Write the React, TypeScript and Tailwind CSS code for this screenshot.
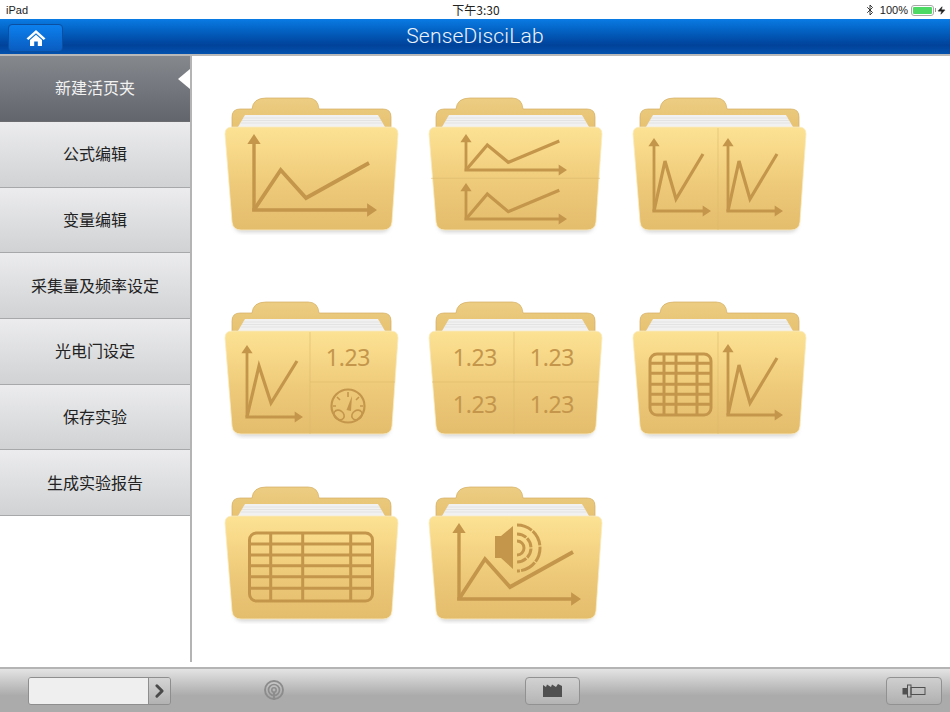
import { type ReactNode } from 'react'
import { Bluetooth, Zap, ChevronRight } from 'lucide-react'

const INK = '#c4964c'
const CJK = "font-['Noto_Sans_CJK_SC','Liberation_Sans',sans-serif]"

const menu = ['新建活页夹', '公式编辑', '变量编辑', '采集量及频率设定', '光电门设定', '保存实验', '生成实验报告']

const FOLDER_PATH = 'M3 39 Q3 32 10 32 L169 32 Q176 32 176 39 L170 127 Q169 135 161 135 L19 135 Q11 135 10 127 Z'

const Folder = ({ id, children }: { id: string; children?: ReactNode }) => (
  <svg width="182" height="150" viewBox="0 0 182 150" className="block">
    <defs>
      <linearGradient id={`front-${id}`} x1="0" y1="0" x2="0" y2="1">
        <stop offset="0" stopColor="#fce294" />
        <stop offset="0.2" stopColor="#f8da8a" />
        <stop offset="0.6" stopColor="#ecc878" />
        <stop offset="1" stopColor="#e4bd6c" />
      </linearGradient>
      <linearGradient id={`back-${id}`} x1="0" y1="0" x2="0" y2="1">
        <stop offset="0" stopColor="#eccd82" />
        <stop offset="1" stopColor="#e7c272" />
      </linearGradient>
      <filter id={`blur-${id}`} x="-10%" y="-10%" width="120%" height="130%">
        <feGaussianBlur stdDeviation="2" />
      </filter>
    </defs>
    <path d="M12 126 L168 126 Q168 137 160 137 L20 137 Q12 137 12 126 Z" fill="#8a8a8a" opacity="0.4" filter={`url(#blur-${id})`} />
    <path
      d="M10 32 L10 22 Q10 14 18 14 L30 14 Q31 3 44 3 L86 3 Q96 3 97 14 L161 14 Q169 14 169 22 L169 32 Z"
      fill={`url(#back-${id})`}
      stroke="#d4ae63"
      strokeWidth="0.7"
    />
    <path d="M16 32 L23 20 L156 20 L163 32 Z" fill="#f1f1f1" />
    <path d="M21 23 H158 M20 25.5 H159 M18.5 28 H160.5" stroke="#dddddd" strokeWidth="0.7" />
    <path d={FOLDER_PATH} fill={`url(#front-${id})`} stroke="#f9ecc4" strokeWidth="0.8" />
    {children}
  </svg>
)

const Chart = ({ x0, y0, top, right, pts, w = 3.2 }: { x0: number; y0: number; top: number; right: number; pts: string; w?: number }) => {
  const a = w * 1.75
  const l = w * 2.6
  return (
    <g fill="none" stroke={INK}>
      <path d={`M${x0} ${y0} V${top + 6} M${x0 - w / 2} ${y0} H${right - 6}`} strokeWidth={w - 0.4} />
      <polyline points={pts} strokeWidth={w} strokeLinejoin="miter" />
      <path d={`M${x0 - a} ${top + l} L${x0} ${top} L${x0 + a} ${top + l} Z M${right - l} ${y0 - a} L${right} ${y0} L${right - l} ${y0 + a} Z`} fill={INK} stroke="none" />
    </g>
  )
}

const Num = ({ x, y }: { x: number; y: number }) => (
  <text x={x} y={y} textAnchor="middle" fontSize="23" fill={INK} fontFamily="'Noto Sans', sans-serif" letterSpacing="-0.3">
    1.23
  </text>
)

const Dividers = ({ d }: { d: string }) => (
  <path d={d} fill="none" stroke="#dcb86c" strokeWidth="0.8" opacity="0.75" />
)

const Grid = ({ x, y, w, h, rows, cols, sw = 3, r = 7 }: { x: number; y: number; w: number; h: number; rows: number[]; cols: number[]; sw?: number; r?: number }) => (
  <g fill="none" stroke={INK} strokeWidth={sw}>
    <rect x={x} y={y} width={w} height={h} rx={r} />
    {rows.map(v => (
      <path key={`r${v}`} d={`M${x} ${v} H${x + w}`} />
    ))}
    {cols.map(v => (
      <path key={`c${v}`} d={`M${v} ${y} V${y + h}`} />
    ))}
  </g>
)

const Gauge = () => (
  <g fill="none" stroke={INK}>
    <circle cx="126" cy="107" r="16.5" strokeWidth="2.2" />
    <path d="M126 93 V98 M115 98 L118 101 M137 98 L134 101 M111 107 H114 M141 107 H138" strokeWidth="1.6" />
    <path d="M124.5 111 L130 97 L129 112 Z" fill={INK} stroke="none" />
    <ellipse cx="117" cy="116" rx="5.5" ry="4.5" strokeWidth="1.6" transform="rotate(35 117 116)" />
    <ellipse cx="135" cy="116" rx="5.5" ry="4.5" strokeWidth="1.6" transform="rotate(-35 135 116)" />
  </g>
)

const Speaker = () => (
  <g>
    <path d="M69 52 H75 L87 42 V85 L75 74 H69 Z" fill={INK} />
    <g fill="none" stroke={INK} strokeWidth="3">
      <path d="M91 41 A23 23 0 0 1 91 87" strokeDasharray="16 1.2" />
      <path d="M91 50 A14 14 0 0 1 91 78" strokeDasharray="10 1.2" />
      <path d="M91 57 A7 7 0 0 1 91 71" />
    </g>
  </g>
)

const App = () => {
  return (
    <div className={`flex h-[712px] w-[950px] flex-col overflow-hidden bg-white ${CJK}`}>
      {/* status bar */}
      <div className="flex h-[19px] shrink-0 items-center justify-between bg-white pt-[1px] pr-[4px] pl-[6px] text-[11px] text-[#222]">
        <span className="w-[200px] font-['Liberation_Sans',sans-serif]">iPad</span>
        <span className="text-[12px]">下午3:30</span>
        <div className="flex w-[200px] items-center justify-end font-['Liberation_Sans',sans-serif]">
          <Bluetooth size={12} strokeWidth={1.8} className="text-[#222]" />
          <span className="ml-[4px]">100%</span>
          <div className="ml-[3px] flex h-[11px] w-[23px] rounded-[3px] border border-[#a8a8a8] p-[1px]">
            <div className="w-full rounded-[1px] bg-[#4cd964]" />
          </div>
          <div className="ml-[1px] h-[4px] w-[1px] bg-[#999]" />
          <Zap size={9} fill="#222" strokeWidth={1} className="ml-[1px]" />
        </div>
      </div>

      {/* nav bar */}
      <div className="relative flex h-[37px] shrink-0 items-center justify-center border-b-2 border-[#b9b9b9] bg-gradient-to-b from-[#0a7be4] via-[#01429a] via-[75%] to-[#0352ae]">
        <button className="absolute top-[5px] left-[8px] flex h-[28px] w-[55px] items-center justify-center rounded-[4px] border border-[#0a4fa0] bg-gradient-to-b from-[#0c80ee] to-[#0a5cc0]">
          <svg width="20" height="18" viewBox="0 0 20 18">
            <path d="M10 1 L19.5 9.5 L17.6 11 L10 4.2 L2.4 11 L0.5 9.5 Z" fill="#fff" />
            <path d="M4 11 L10 5.8 L16 11 V17 H11.8 V12.5 H8.2 V17 H4 Z" fill="#fff" />
          </svg>
        </button>
        <span className="pt-[1px] font-['Roboto',sans-serif] text-[21px] font-light tracking-[0.2px] text-[#eef3fa]">SenseDisciLab</span>
      </div>

      {/* body */}
      <div className="flex min-h-0 flex-1">
        <div className="w-[192px] shrink-0 pb-[5px]">
          <div className="h-full border-r-2 border-[#b4b4b4]">
            {menu.map((item, i) => (
              <div
                key={item}
                className={
                  i === 0
                    ? 'relative flex h-[66px] items-center justify-center border-b border-[#6a6c70] bg-gradient-to-b from-[#85888d] to-[#62656c] pb-[3px] text-[16px] text-[#f2f2f2]'
                    : 'flex h-[65.7px] items-center justify-center border-b border-[#a6a8aa] bg-gradient-to-b from-[#ececee] to-[#d0d2d4] pb-[2px] text-[16px] text-[#222]'
                }
              >
                {item}
                {i === 0 && (
                  <div className="absolute top-[13px] right-0 h-0 w-0 border-y-[10px] border-r-[12px] border-y-transparent border-r-white" />
                )}
              </div>
            ))}
          </div>
        </div>

        <div className="grid flex-1 grid-cols-[204px_204px_204px] grid-rows-[204px_185px] content-start pt-[39px] pl-[30px]">
          <Folder id="a">
            <Chart x0={32} y0={115} top={39} right={155} pts="32,115 58.7,75 84,103 147,68" w={3.8} />
          </Folder>
          <Folder id="b">
            <Dividers d="M5 83.3 H174" />
            <Chart x0={40} y0={75} top={39} right={141} pts="40,75 61.3,50 82.3,67.3 133.3,46" />
            <Chart x0={40} y0={124} top={88} right={141} pts="40,124 61.3,99 82.3,116.7 133.3,95.3" />
          </Folder>
          <Folder id="c">
            <Dividers d="M88 33 V135" />
            <Chart x0={24} y0={116} top={43} right={81} pts="24,116 35,66 46,104 73,59" />
            <Chart x0={98} y0={116} top={43} right={153} pts="98,116 109,66 120,104 147,59" />
          </Folder>
          <Folder id="d">
            <Dividers d="M88 33 V135 M88 83 H173" />
            <Chart x0={25} y0={118} top={46} right={81} pts="25,118 37,67 49,104 75,62" />
            <Num x={126} y={67} />
            <Gauge />
          </Folder>
          <Folder id="e">
            <Dividers d="M88 33 V135 M6 83 H172" />
            <Num x={49} y={67} />
            <Num x={126} y={67} />
            <Num x={49} y={114} />
            <Num x={126} y={114} />
          </Folder>
          <Folder id="f">
            <Dividers d="M88 33 V135" />
            <Grid x={20} y={55} w={61} h={61} rows={[64.3, 74.3, 85.3, 95.3, 105.3]} cols={[34, 46, 67]} />
            <Chart x0={98} y0={116} top={45} right={153} pts="98,116 109,66 120,104 147,59" />
          </Folder>
          <Folder id="g">
            <Grid x={27.5} y={49} w={123} h={68} rows={[60, 71, 81.7, 92.7, 104.3]} cols={[48.7, 80.7, 128.7]} />
          </Folder>
          <Folder id="h">
            <Chart x0={33} y0={115} top={39} right={155} pts="33,115 59,75 84,103 147,68" w={3.8} />
            <Speaker />
          </Folder>
        </div>
      </div>

      {/* bottom toolbar */}
      <div className="flex h-[45px] shrink-0 items-center border-t-2 border-[#b4b4b4] bg-gradient-to-b from-[#e4e4e4] via-[#ababab] via-[62%] to-[#ababab] pl-[28px]">
        <div className="flex h-[28px] w-[143px] overflow-hidden rounded-[3px] border border-[#8e8e8e]">
          <div className="flex-1 bg-[#efefef]" />
          <div className="flex w-[22px] items-center justify-center border-l border-[#8e8e8e] bg-gradient-to-b from-[#d4d4d4] to-[#b2b2b2]">
            <ChevronRight size={24} strokeWidth={3.4} className="text-[#4a4a4a]" />
          </div>
        </div>
        <svg width="22" height="22" viewBox="0 0 22 22" className="ml-[92px]" fill="none" stroke="#8c8c8c">
          <circle cx="11" cy="10" r="9" strokeWidth="1.9" />
          <circle cx="11" cy="10" r="5.5" strokeWidth="1.7" />
          <circle cx="11" cy="10" r="2.2" strokeWidth="1.5" />
          <path d="M11 12 V20" strokeWidth="2.2" />
        </svg>
        <button className="ml-[240px] flex h-[28px] w-[55px] items-center justify-center rounded-[4px] border border-[#919191] bg-gradient-to-b from-[#d2d2d2] to-[#b4b4b4]">
          <svg width="20" height="13" viewBox="0 0 20 13">
            <path d="M0 1 L3 3 L4 0.5 L8 3 L9 0.5 L13 3 L15 0 L19 2 V13 H0 Z" fill="#505050" />
          </svg>
        </button>
        <button className="ml-[306px] flex h-[28px] w-[56px] items-center justify-center rounded-[4px] border border-[#919191] bg-gradient-to-b from-[#cfcfcf] to-[#b0b0b0]">
          <svg width="24" height="14" viewBox="0 0 24 14">
            <rect x="0.5" y="4" width="5" height="6.5" fill="#505050" />
            <rect x="5.5" y="1" width="3.5" height="12" fill="none" stroke="#505050" strokeWidth="1" />
            <rect x="9" y="3.5" width="14" height="7" fill="none" stroke="#505050" strokeWidth="1" />
          </svg>
        </button>
      </div>
    </div>
  )
}

export default App
